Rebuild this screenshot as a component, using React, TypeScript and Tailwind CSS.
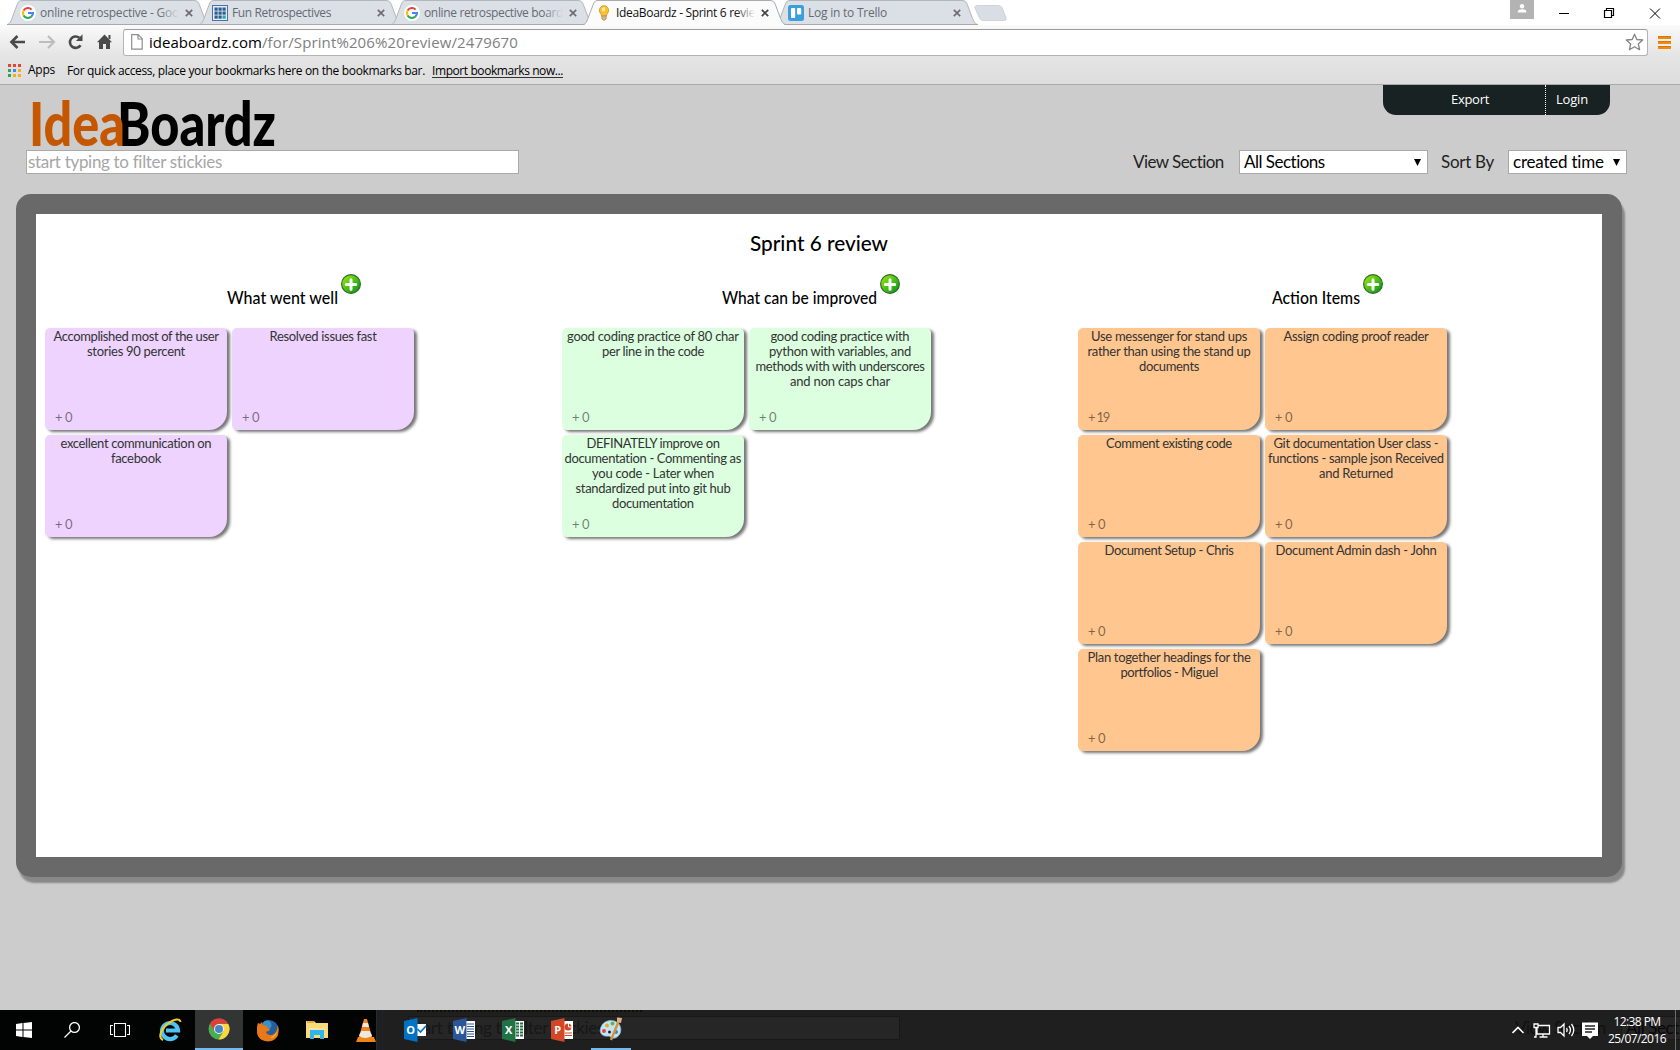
import React, { useLayoutEffect, useRef, type ReactNode } from "react";

const SANS = "font-['Open_Sans','Noto_Sans',sans-serif]";

/** Text set to an exact advance width, by tracking or by condensing the glyphs. */
function Fit({ w, squeeze = false, className = "", children }: { w: number; squeeze?: boolean; className?: string; children: ReactNode }) {
  const ref = useRef<HTMLSpanElement>(null);
  useLayoutEffect(() => {
    const el = ref.current;
    if (!el) return;
    el.style.letterSpacing = "0px";
    el.style.transform = "none";
    const natural = el.getBoundingClientRect().width;
    const count = (el.textContent || "").length;
    if (squeeze) el.style.transform = `scaleX(${w / natural})`;
    else el.style.letterSpacing = `${(w - natural) / count}px`;
  }, [w, squeeze]);
  return (
    <span className={`block shrink-0 whitespace-nowrap ${className}`} style={{ width: w }}>
      <span ref={ref} className="inline-block origin-left whitespace-nowrap">{children}</span>
    </span>
  );
}

function Google() {
  return (
    <svg width="16" height="16" viewBox="0 0 16 16">
      <circle cx="8" cy="8" r="8" fill="#fff" />
      <g fill="none" strokeWidth="2.1">
        <path d="M3.6 5.6A5 5 0 0 1 11.6 4.6" stroke="#ea4335" />
        <path d="M3.6 10.4A5 5 0 0 1 3.6 5.6" stroke="#fbbc05" />
        <path d="M11.4 11.6A5 5 0 0 1 3.6 10.4" stroke="#34a853" />
        <path d="M8 8h5a5 5 0 0 1-1.7 3.7" stroke="#4285f4" />
      </g>
    </svg>
  );
}
function Grid() {
  return (
    <svg width="16" height="16" viewBox="0 0 16 16">
      <path d="M0 0h16v16H0z" fill="#4a6fb0" />
      <path d="M1 1h14v14H1z" fill="#e6edf3" />
      <g>
        {[2, 6, 10].map((y) => [2, 6, 10].map((x) => <rect key={`${x}-${y}`} x={x + 0.5} y={y + 0.5} width="3.2" height="3.2" fill={x === 10 && y === 10 ? "#17b39a" : "#2d5d91"} />))}
      </g>
    </svg>
  );
}
function Bulb() {
  return (
    <svg width="16" height="16" viewBox="0 0 16 16">
      <path d="M8 .7a4.6 4.6 0 0 0-4.6 4.6C3.400 8 5.500 8.500 5.500 11h5c0-2.500 2.100-3 2.100-5.700A4.600 4.600 0 0 0 8 .7z" fill="#f9c232" stroke="#dc9a2c" />
      <path d="M6 3.500a3 3 0 0 1 3-1.300v4H6z" fill="#fff0a0" />
      <path d="M5.800 11h4.400v3L8 15.500 5.800 14z" fill="#d4b48a" stroke="#b9894b" strokeWidth=".7" />
    </svg>
  );
}
function Trello() {
  return (
    <svg width="16" height="16" viewBox="0 0 16 16">
      <rect width="16" height="16" rx="2.500" fill="#3a9fdb" />
      <rect x="3" y="3" width="4.200" height="10" rx=".8" fill="#fff" />
      <rect x="9" y="3" width="4.200" height="6.500" rx=".8" fill="#fff" />
    </svg>
  );
}

const tabs = [
  { title: "online retrospective - Goo", w: 139, icon: <Google />, fade: true },
  { title: "Fun Retrospectives", w: 99, icon: <Grid /> },
  { title: "online retrospective board", w: 139, icon: <Google />, fade: true },
  { title: "IdeaBoardz - Sprint 6 revie", w: 139, icon: <Bulb />, fade: true, active: true },
  { title: "Log in to Trello", w: 79, icon: <Trello /> },
];

function TabStrip() {
  return (
    <div className="flex h-[25px] items-start bg-white pl-[7px]">
      {tabs.map((t, i) => (
        <div key={i} className={`relative flex h-[25px] w-[192px] shrink-0 items-center pl-[13px] ${t.active ? "z-10" : ""}`}>
          <svg className="absolute left-0 top-0" width="204" height="25" viewBox="0 0 204 25">
            <path d="M0 24.500C3 24 4 21 5.500 17L10 5C11 2 12 .5 15 .5H187C190 .5 191.500 2 192.500 5L197 17C198.500 21 199.500 24 203 24.500" fill={t.active ? "#fbfbfb" : "#dbe0e7"} stroke={t.active ? "#a9abae" : "#b3b6bb"} />
            {t.active ? <path d="M2 24.500H201" stroke="#fbfbfb" /> : <path d="M0 24.500H203" stroke="#a8a9ab" />}
          </svg>
          <div className="relative h-4 w-4">{t.icon}</div>
          <div className="relative ml-1 w-[139px] overflow-hidden">
            <Fit w={t.w} className={`${SANS} text-[12px] leading-5 ${t.active ? "text-[#111]" : "text-[#666a70]"}`}>{t.title}</Fit>
            {t.fade && <div className={`absolute right-0 top-0 h-5 w-5 bg-linear-to-r from-transparent ${t.active ? "to-[#fbfbfb]" : "to-[#dbe0e7]"}`} />}
          </div>
          <svg className="relative ml-[6px]" width="8" height="8" viewBox="0 0 8 8"><path d="M.8.8l6.400 6.400M7.200.8L.8 7.200" stroke={t.active ? "#444" : "#6b6d70"} strokeWidth="1.700" /></svg>
        </div>
      ))}
      <svg className="ml-[7px] mt-[5px]" width="34" height="17" viewBox="0 0 34 17"><path d="M4 .5H24.500Q27 .5 28.200 3L32 13Q33 15.500 30 15.500H9Q7 15.500 5.500 13L1 3Q0 .5 4 .5z" fill="#d9dee5" stroke="#d0d2d5" /></svg>
      <div className="ml-[502px] flex h-[19px] w-6 justify-center bg-[#b3b3b3]">
        <svg width="10" height="10" viewBox="0 0 10 10" className="mt-1"><circle cx="5" cy="2.200" r="2.200" fill="#fff" /><path d="M.8 8.500V7Q1.500 5.200 5 5.200T9.200 7v1.500z" fill="#fff" /></svg>
      </div>
      <svg className="ml-[24px] mt-[7px]" width="104" height="13" viewBox="0 0 104 13" fill="none" stroke="#000">
        <path d="M1 6.500h10" />
        <path d="M46.500 3.500h7v7h-7zM48.500 3.500v-2h7v7h-2" strokeWidth="1.200" />
        <path d="M92 1.500l10 10M102 1.500l-10 10" />
      </svg>
    </div>
  );
}

function BrowserBar() {
  return (
    <div className="flex h-[60px] flex-col border-b border-[#a9a9a9] bg-linear-to-b from-[#fafafa] via-[#e5e5e5] to-[#dddddd]">
      <div className="flex h-[35px] shrink-0 items-center pb-px pl-[9px]">
        <svg width="104" height="18" viewBox="0 0 104 18" fill="none">
          <path d="M8.500 3L2.500 9l6 6M3 9h13" stroke="#4a4a4a" strokeWidth="2.700" />
          <path d="M39 3l6 6-6 6M30 9h14" stroke="#bdbdbd" strokeWidth="2.200" />
          <path d="M71.500 12.200A5.700 5.700 0 1 1 70.300 4.800" stroke="#4a4a4a" strokeWidth="2.600" />
          <path d="M73.500 1.300v6.600h-6.600z" fill="#4a4a4a" />
          <path d="M95.500 1.500L103 9.300h-2V16h-4v-5h-3v5h-4V9.300h-2z" fill="#4a4a4a" />
          <path d="M99.500 2h2v4h-2z" fill="#4a4a4a" />
        </svg>
        <div className="ml-[10px] flex h-[27px] w-[1525px] items-center rounded-[3px] border border-[#b4b4b4] border-t-[#9b9b9b] bg-white pl-[7px]">
          <svg width="12" height="16" viewBox="0 0 12 16"><path d="M.7.7h6.500l4 4v10.500H.7zM7 .7v4.300h4" fill="#fff" stroke="#8e8e8e" strokeWidth="1.200" /></svg>
          <Fit w={113} className={`${SANS} ml-[6px] text-[15px] leading-6 text-black`}>ideaboardz.com</Fit>
          <Fit w={256} className={`${SANS} text-[15px] leading-6 text-[#808080]`}>/for/Sprint%206%20review/2479670</Fit>
          <svg className="ml-auto mr-[3px]" width="19" height="18" viewBox="0 0 19 18"><path d="M9.500 1.200l2.300 5.300 5.900.5-4.400 4 1.300 5.700-5.100-3-5.100 3 1.300-5.700-4.400-4 5.900-.5z" fill="#fff" stroke="#858585" strokeWidth="1.300" strokeLinejoin="round" /></svg>
        </div>
        <svg className="ml-[10px]" width="13" height="13" viewBox="0 0 13 13"><path d="M0 1.500h13M0 6.500h13M0 11.500h13" stroke="#ef8a0c" strokeWidth="3" /><path d="M0 .5h13M0 5.500h13M0 10.500h13" stroke="#dd7208" /></svg>
      </div>
      <div className={`flex h-[20px] items-center pl-2 text-[12px] leading-4 text-black ${SANS}`}>
        <svg width="13" height="13" viewBox="0 0 13 13">
          <path d="M0 0h3v3H0zM5 0h3v3H5zM10 0h3v3h-3z" fill="#ea4335" />
          <path d="M0 5h3v3H0zM0 10h3v3H0z" fill="#2fa558" /><path d="M5 5h3v3H5z" fill="#3b8cf0" />
          <path d="M10 5h3v3h-3zM5 10h3v3H5zM10 10h3v3h-3z" fill="#f9ae15" />
        </svg>
        <Fit w={27} className="ml-[7px]">Apps</Fit>
        <Fit w={358} className="ml-[12px] mt-px">For quick access, place your bookmarks here on the bookmarks bar.</Fit>
        <Fit w={131} className="ml-[7px] mt-px h-[15px] border-b border-[#333]">Import bookmarks now...</Fit>
      </div>
    </div>
  );
}

function Select({ className, w, children }: { className: string; w: number; children: ReactNode }) {
  return (
    <div className={`flex h-6 items-center justify-between border border-[#a9a9a9] bg-white pl-[4px] pr-[6px] text-black ${className}`}>
      <Fit w={w}>{children}</Fit>
      <svg width="7" height="7" viewBox="0 0 7 7"><path d="M0 0h7L3.500 7z" fill="#000" /></svg>
    </div>
  );
}

function Header() {
  return (
    <div className="h-[109px]">
      <div className="flex h-[65px] items-start pl-[29px]">
        <div className="flex pt-[6px] text-[60px] font-black leading-[64px]">
          <Fit w={96} squeeze className="relative z-10 text-[#c45700]">Idea</Fit>
          <Fit w={159} squeeze className="-ml-[8px] text-black">Boardz</Fit>
        </div>
        <div className={`ml-auto mr-[70px] flex h-[30px] w-[227px] rounded-b-[13px] bg-[#182222] text-[13px] leading-[28px] text-white ${SANS}`}>
          <div className="h-full w-[163px] border-r border-dotted border-white pl-[68px]"><Fit w={38}>Export</Fit></div>
          <Fit w={32} className="ml-[10px]">Login</Fit>
        </div>
      </div>
      <div className="relative z-10 flex items-center pl-[26px] text-[17px] leading-[22px]">
        <div className="h-6 w-[493px] border border-[#a9a9a9] bg-white pl-px text-[#a6a6a6]"><Fit w={194}>start typing to filter stickies</Fit></div>
        <Fit w={91} className="ml-[614px] text-[#222]">View Section</Fit>
        <Select className="ml-[15px] w-[189px]" w={81}>All Sections</Select>
        <Fit w={53} className="ml-[13px] text-[#222]">Sort By</Fit>
        <Select className="ml-[14px] w-[119px]" w={91}>created time</Select>
      </div>
    </div>
  );
}

type Line = [string, number];
type Note = { lines: Line[]; votes?: number };
const sections: { title: string; w: number; pad: string; color: string; notes: Note[] }[] = [
  {
    title: "What went well", w: 111, pad: "pl-[182px]", color: "bg-[#edd3fe]",
    notes: [
      { lines: [["Accomplished most of the user", 165], ["stories 90 percent", 98]] },
      { lines: [["Resolved issues fast", 107]] },
      { lines: [["excellent communication on", 151], ["facebook", 50]] },
    ],
  },
  {
    title: "What can be improved", w: 155, pad: "pl-[160px]", color: "bg-[#dbffdf]",
    notes: [
      { lines: [["good coding practice of 80 char", 172], ["per line in the code", 102]] },
      { lines: [["good coding practice with", 139], ["python with variables, and", 142], ["methods with with underscores", 169], ["and non caps char", 100]] },
      { lines: [["DEFINATELY improve on", 133], ["documentation - Commenting as", 177], ["you code - Later when", 122], ["standardized put into git hub", 155], ["documentation", 82]] },
    ],
  },
  {
    title: "Action Items", w: 88, pad: "pl-[194px]", color: "bg-[#ffc68f]",
    notes: [
      { lines: [["Use messenger for stand ups", 156], ["rather than using the stand up", 163], ["documents", 60]], votes: 19 },
      { lines: [["Assign coding proof reader", 145]] },
      { lines: [["Comment existing code", 126]] },
      { lines: [["Git documentation User class -", 165], ["functions - sample json Received", 176], ["and Returned", 74]] },
      { lines: [["Document Setup - Chris", 129]] },
      { lines: [["Document Admin dash - John", 161]] },
      { lines: [["Plan together headings for the", 163], ["portfolios - Miguel", 97]] },
    ],
  },
];

function Plus() {
  return (
    <svg width="20" height="20" viewBox="0 0 20 20">
      <defs><linearGradient id="plus" x1="0" y1="0" x2="1" y2="1"><stop stopColor="#a2ef10" /><stop offset=".5" stopColor="#4dc013" /><stop offset="1" stopColor="#008b27" /></linearGradient></defs>
      <circle cx="10" cy="10" r="9.400" fill="url(#plus)" stroke="#356b2b" strokeWidth="1.200" />
      <path d="M10 5.800v9.400M5.300 10.500h9.400" stroke="#fff" strokeWidth="3" strokeLinecap="round" />
    </svg>
  );
}

function Board() {
  return (
    <div className="ml-4 h-[683px] w-[1606px] rounded-[15px] border-[20px] border-[#696969] bg-white shadow-[3px_6px_2px_#888]">
      <h1 className="flex h-[60px] justify-center pt-[15px] text-[22px] font-medium leading-7 text-black"><Fit w={138} squeeze>Sprint 6 review</Fit></h1>
      <div className="grid grid-cols-[517px_516px_1fr] pl-[9px]">
        {sections.map((s) => (
          <section key={s.title}>
            <div className={`flex h-[54px] ${s.pad}`}>
              <Fit w={s.w} squeeze className="pt-[12px] text-[17px] font-medium leading-6 text-black">{s.title}</Fit>
              <div className="ml-[3px]"><Plus /></div>
            </div>
            <div className="grid grid-cols-[182px_182px] gap-[5px]">
              {s.notes.map((n, i) => (
                <article key={i} className={`flex h-[102px] flex-col items-center rounded-[5px] rounded-br-[18px] pt-px text-[13px] leading-[15px] text-[#333] shadow-[3px_2px_3px_#777] ${s.color}`}>
                  {n.lines.map(([text, w]) => <Fit key={text} w={w}>{text}</Fit>)}
                  <Fit w={n.votes ? 21 : 17} className="mb-[5px] ml-[10px] mt-auto self-start text-black/50">{`+ ${n.votes ?? 0}`}</Fit>
                </article>
              ))}
            </div>
          </section>
        ))}
      </div>
    </div>
  );
}

function Office({ letter, color, children }: { letter: string; color: string; children: ReactNode }) {
  return (
    <svg width="23" height="24" viewBox="0 0 23 24">
      {children}
      <path d="M0 3L13.500 0v24L0 21z" fill={color} />
      <text x="6.700" y="16.200" textAnchor="middle" fontSize="11" fontWeight="700" fill="#fff" fontFamily="Open Sans, sans-serif">{letter}</text>
    </svg>
  );
}

function Taskbar() {
  return (
    <div className={`relative flex h-10 items-center overflow-hidden bg-[#020303] ${SANS}`}>
      <div className="absolute left-[376px] top-0 h-10 w-[1304px] border-l border-[#292929] bg-[#1f1f1f]">
        <div className="absolute left-[5px] h-10 border-l border-dashed border-[#17243a]" />
        <div className="absolute left-[40px] top-0 h-[2px] w-[225px] border-t-2 border-dotted border-[#100c08]" />
        <div className="absolute left-[31px] top-[6px] h-6 w-[492px] border border-[#181818] bg-[#262626] pl-px font-['Lato',sans-serif] text-[17px] leading-[22px] text-[#171717]"><Fit w={194}>start typing to filter stickies</Fit></div>
        <div className="absolute left-[1138px] top-[7px] font-['Lato',sans-serif] text-[17px] leading-[22px] text-[#101010]"><Fit w={91}>View Section</Fit></div>
        <div className="absolute left-[1244px] top-[6px] h-6 w-[60px] border border-[#181818] bg-[#262626] pl-1 font-['Lato',sans-serif] text-[17px] leading-[22px] text-[#080808]"><Fit w={82}>All Sections</Fit></div>
      </div>
      <svg className="relative ml-4" width="16" height="16" viewBox="0 0 16 16"><path d="M0 2l6.500-.9v6.400H0zM7.500 1L16 0v7.500H7.500zM0 8.500h6.500v6.400L0 14zM7.500 8.500H16V16l-8.500-1z" fill="#fff" /></svg>
      <svg className="relative ml-8" width="16" height="16" viewBox="0 0 16 16" fill="none" stroke="#fff" strokeWidth="1.300"><circle cx="10.500" cy="5.500" r="4.900" /><path d="M7 9L.5 15.500" /></svg>
      <svg className="relative ml-[30px]" width="20" height="14" viewBox="0 0 20 14" fill="none" stroke="#fff" strokeWidth="1.100"><path d="M4.500.5h11v13h-11zM3 2.500H.5v9H3M17 2.500h2.500v9H17" /></svg>
      <svg className="relative ml-[29px]" width="23" height="24" viewBox="0 0 23 24" fill="none">
        <path d="M17.800 17.300A8 8 0 1 1 19 12.500H7" stroke="#4fc4f4" strokeWidth="4.200" />
        <path d="M4 22C-2 19 3 10 9 5.500S21 0 21.500 4" stroke="#f7ca25" strokeWidth="2" />
      </svg>
      <div className="relative ml-[13px] flex h-10 w-12 items-center justify-center border-b-2 border-[#76b9ed] bg-[#333535]">
        <svg width="22" height="22" viewBox="0 0 22 22">
          <circle cx="11" cy="11" r="10.500" fill="#4aae4f" />
          <path d="M11 11L1.900 5.750A10.500 10.500 0 0 1 20.100 5.750H11z" fill="#df3f34" />
          <path d="M11 6h9.200A10.500 10.500 0 0 1 10.500 21.500L15.500 13.500z" fill="#fdd541" />
          <path d="M11 6L6.700 13.500 1.900 5.750z" fill="#df3f34" />
          <circle cx="11" cy="11" r="5" fill="#eef2f5" /><circle cx="11" cy="11" r="4" fill="#4487c5" />
        </svg>
      </div>
      <svg className="relative ml-[14px]" width="22" height="23" viewBox="0 0 22 23">
        <circle cx="12" cy="10.500" r="9.500" fill="#235e9d" /><circle cx="10" cy="6" r="4.500" fill="#3b91c7" />
        <path d="M1 4C-1 10-1 18 5 21s14 1 16-5c1-4 1-7-.5-10 .2 5-1.500 8-4.500 9.500s-7 0-7-3c2 0 3-.5 4-2-2-1-3-2-3.500-3.500L6 6 4 2.500 3.500 5z" fill="#e97918" />
        <path d="M20.500 6c.7 6-2 11-7.500 12.500 5 1 8-4 7.500-12.500z" fill="#fbc33d" />
      </svg>
      <svg className="relative ml-[27px]" width="22" height="20" viewBox="0 0 22 20">
        <path d="M0 1h8l2 2h12v15H0z" fill="#fadb7b" /><path d="M1 1h7v2H1z" fill="#e7ae38" />
        <path d="M4 10h14v9h-4v-4H8v4H4z" fill="#2eb6ec" /><path d="M3 8h16v2H3z" fill="#f7e6a5" />
      </svg>
      <svg className="relative ml-[28px]" width="20" height="23" viewBox="0 0 20 23">
        <path d="M8 0h3l5 18H3z" fill="#f2821b" /><path d="M7 4h5l1 4H6zM5 12h9l1 4H4z" fill="#e9e9e5" /><path d="M2 18h16l2 5H0z" fill="#ee8416" /><path d="M3 17q6 4 13 0l-1-3H4z" fill="#f2e7dc" />
      </svg>
      <div className="relative ml-[28px] flex gap-[26px]">
        <Office letter="O" color="#0072c6"><path d="M12 6h10v12H12z" fill="#fff" /><path d="M13.500 11l3 3L22 8" fill="none" stroke="#0072c6" strokeWidth="1.700" /></Office>
        <Office letter="W" color="#2b579a"><path d="M12 3h10v18H12z" fill="#fff" /><path d="M14 6h7M14 8.500h7M14 11h7M14 13.500h7M14 16h7M14 18.500h7" stroke="#2b579a" /></Office>
        <Office letter="X" color="#217346"><path d="M12 3h10v18H12z" fill="#fff" /><path d="M14 5.500h3M18 5.500h3M14 8.500h3M18 8.500h3M14 11.500h3M18 11.500h3M14 14.500h3M18 14.500h3M14 17.500h3M18 17.500h3" stroke="#217346" strokeWidth="2" /></Office>
        <Office letter="P" color="#d24726"><path d="M12 3h10v18H12z" fill="#fff" /><circle cx="17" cy="9" r="3.500" fill="#d24726" /><path d="M17.500 5v4h4" stroke="#fff" fill="none" /><path d="M14 15h7M14 17.500h7" stroke="#d24726" /></Office>
      </div>
      <div className="relative ml-[17px] flex h-10 w-10 items-center justify-center border-b-2 border-[#76b9ed]">
        <svg width="24" height="24" viewBox="0 0 24 24">
          <path d="M2 10C4 4 13 1 19 6c5 5 3 13-3 15-4 1-4-2-7-2-4 1-10-2-7-9z" fill="#c3e4f6" stroke="#8ab9d8" strokeWidth=".7" />
          <circle cx="5" cy="14" r="2" fill="#e5453c" /><circle cx="8" cy="8.500" r="2" fill="#eba72c" /><circle cx="13.500" cy="6.500" r="2" fill="#65b548" /><circle cx="17" cy="15" r="2" fill="#4382c8" /><circle cx="10.500" cy="15" r="1.500" fill="#222" />
          <path d="M21 1L12 23" stroke="#d99037" strokeWidth="2.400" /><path d="M18 .5l5 .5-1 5-4-1z" fill="#dfb284" />
        </svg>
      </div>
      <svg className="relative ml-[881px]" width="86" height="18" viewBox="0 0 86 18" fill="none" stroke="#fff" strokeWidth="1.300">
        <path d="M.5 12L6 6.500l5.500 5.500" strokeWidth="1.600" />
        <path d="M26 4.500h11.500v8.500H25V7M31 13v3M27.500 16h8M22 3h4v3.500h-4zM24 6.500V16h-2" />
        <path d="M46 6.500h2.500L52 3v12l-3.500-3.500H46zM54.500 7q1.500 2 0 4M57 5q3 4 0 8M59.500 3q4.500 6 0 12" />
        <path d="M70 1.500h16V15h-5l-3 3-3-3h-5z" fill="#fff" stroke="none" /><path d="M73 5h10M73 8h10M73 11h7" stroke="#222" />
      </svg>
      <div className="relative ml-[10px] flex flex-col items-center pb-px text-[12px] leading-[17px] text-white">
        <Fit w={47}>12:38 PM</Fit><Fit w={58}>25/07/2016</Fit>
      </div>
      <div className="relative ml-[9px] h-10 border-l border-[#6c6c6c]" />
    </div>
  );
}

export default function App() {
  return (
    <div className="flex h-[1050px] w-[1680px] flex-col overflow-hidden bg-[#ccc] font-['Lato',sans-serif]">
      <TabStrip />
      <BrowserBar />
      <Header />
      <Board />
      <div className="mt-auto"><Taskbar /></div>
    </div>
  );
}
